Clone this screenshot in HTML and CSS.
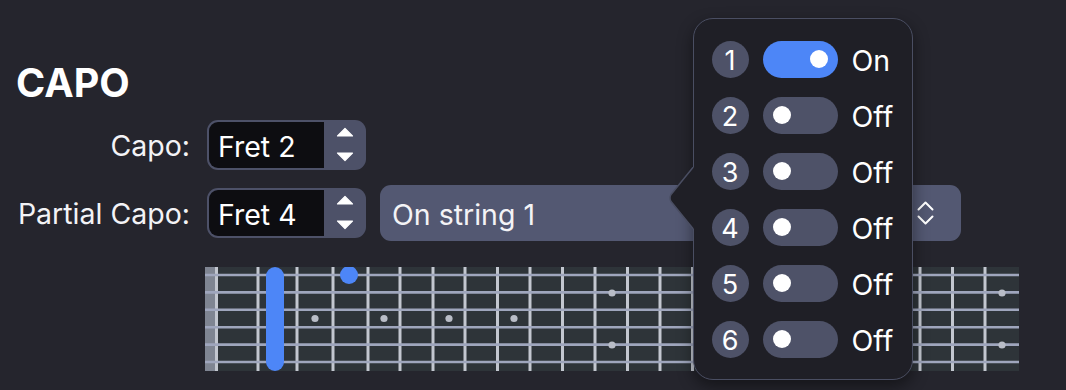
FILE: index.html
```html
<!DOCTYPE html>
<html>
<head>
<meta charset="utf-8">
<title>Capo</title>
<link rel="stylesheet" href="styles.css">
</head>
<body>
<main class="panel">
  <h1 class="title">CAPO</h1>
  <div class="form">
    <span class="label">Capo:</span>
    <div class="controls">
      <div class="stepper">
        <span class="field">Fret 2</span>
        <span class="arrows">
          <svg width="42" height="46" viewBox="0 0 42 46"><polygon points="13.5,14 21,6.5 28.5,14" fill="#fff" stroke="#fff" stroke-width="1.2" stroke-linejoin="round"/><polygon points="13.5,31 28.5,31 21,38.5" fill="#fff" stroke="#fff" stroke-width="1.2" stroke-linejoin="round"/></svg>
        </span>
      </div>
    </div>
    <span class="label">Partial Capo:</span>
    <div class="controls">
      <div class="stepper">
        <span class="field">Fret 4</span>
        <span class="arrows">
          <svg width="42" height="46" viewBox="0 0 42 46"><polygon points="13.5,14 21,6.5 28.5,14" fill="#fff" stroke="#fff" stroke-width="1.2" stroke-linejoin="round"/><polygon points="13.5,31 28.5,31 21,38.5" fill="#fff" stroke="#fff" stroke-width="1.2" stroke-linejoin="round"/></svg>
        </span>
      </div>
      <div class="select">
        <span>On string 1</span>
        <svg class="chevrons" width="17" height="24" viewBox="0 0 17 24"><polyline points="1.5,8.5 8.5,1.5 15.5,8.5" fill="none" stroke="#fff" stroke-width="2" stroke-linecap="round" stroke-linejoin="round"/><polyline points="1.5,15.5 8.5,22.5 15.5,15.5" fill="none" stroke="#fff" stroke-width="2" stroke-linecap="round" stroke-linejoin="round"/></svg>
      </div>
    </div>
  </div>
  <svg class="fretboard" width="814" height="104" viewBox="0 0 814 104">
    <rect x="0" y="0" width="814" height="104" fill="#2e3439"/>
    <rect x="0" y="0" width="10" height="104" fill="#7f8592"/>
    <g stroke="#c3c7d0" stroke-width="3">
      <line x1="11.5" y1="0" x2="11.5" y2="104"/>
      <line x1="53" y1="0" x2="53" y2="104"/>
      <line x1="92" y1="0" x2="92" y2="104"/>
      <line x1="128" y1="0" x2="128" y2="104"/>
      <line x1="163" y1="0" x2="163" y2="104"/>
      <line x1="195" y1="0" x2="195" y2="104"/>
      <line x1="228" y1="0" x2="228" y2="104"/>
      <line x1="260" y1="0" x2="260" y2="104"/>
      <line x1="292.5" y1="0" x2="292.5" y2="104"/>
      <line x1="325" y1="0" x2="325" y2="104"/>
      <line x1="357.5" y1="0" x2="357.5" y2="104"/>
      <line x1="390" y1="0" x2="390" y2="104"/>
      <line x1="422.5" y1="0" x2="422.5" y2="104"/>
      <line x1="455" y1="0" x2="455" y2="104"/>
      <line x1="487.5" y1="0" x2="487.5" y2="104"/>
      <line x1="520" y1="0" x2="520" y2="104"/>
      <line x1="552.5" y1="0" x2="552.5" y2="104"/>
      <line x1="585" y1="0" x2="585" y2="104"/>
      <line x1="617.5" y1="0" x2="617.5" y2="104"/>
      <line x1="650" y1="0" x2="650" y2="104"/>
      <line x1="682.5" y1="0" x2="682.5" y2="104"/>
      <line x1="715" y1="0" x2="715" y2="104"/>
      <line x1="747.5" y1="0" x2="747.5" y2="104"/>
      <line x1="780" y1="0" x2="780" y2="104"/>
    </g>
    <g stroke="#9fa6bd" stroke-width="2.6">
      <line x1="0" y1="8" x2="814" y2="8"/>
      <line x1="0" y1="25.4" x2="814" y2="25.4"/>
      <line x1="0" y1="42.8" x2="814" y2="42.8"/>
      <line x1="0" y1="60.2" x2="814" y2="60.2"/>
      <line x1="0" y1="77.6" x2="814" y2="77.6"/>
      <line x1="0" y1="95" x2="814" y2="95"/>
    </g>
    <g fill="#b9bdc7">
      <circle cx="110" cy="51.5" r="3.6"/>
      <circle cx="179" cy="51.5" r="3.6"/>
      <circle cx="244" cy="51.5" r="3.6"/>
      <circle cx="309" cy="51.5" r="3.6"/>
      <circle cx="407" cy="26" r="3.6"/>
      <circle cx="407" cy="78" r="3.6"/>
      <circle cx="504" cy="51.5" r="3.6"/>
      <circle cx="569" cy="51.5" r="3.6"/>
      <circle cx="634" cy="51.5" r="3.6"/>
      <circle cx="699" cy="51.5" r="3.6"/>
      <circle cx="797" cy="26" r="3.6"/>
      <circle cx="797" cy="78" r="3.6"/>
    </g>
    <rect x="61" y="0" width="18" height="104" rx="9" fill="#4d86f7"/>
    <circle cx="144" cy="8" r="9" fill="#4d86f7"/>
  </svg>
</main>

<div class="popover">
  <svg class="pointer" width="27" height="62" viewBox="0 0 27 62"><path d="M27,0 L24.3,0 L2,27.5 Q0,31 2,34.5 L24.3,62 L27,62 Z" fill="#1f1f26"/><path d="M24.3,0 L2,27.5 Q0,31 2,34.5 L24.3,62" fill="none" stroke="#4a4e62" stroke-width="1.5"/></svg>
  <div class="row"><span class="num">1</span><span class="toggle on"><span class="knob"></span></span><span class="state">On</span></div>
  <div class="row"><span class="num">2</span><span class="toggle"><span class="knob"></span></span><span class="state">Off</span></div>
  <div class="row"><span class="num">3</span><span class="toggle"><span class="knob"></span></span><span class="state">Off</span></div>
  <div class="row"><span class="num">4</span><span class="toggle"><span class="knob"></span></span><span class="state">Off</span></div>
  <div class="row"><span class="num">5</span><span class="toggle"><span class="knob"></span></span><span class="state">Off</span></div>
  <div class="row"><span class="num">6</span><span class="toggle"><span class="knob"></span></span><span class="state">Off</span></div>
</div>
</body>
</html>
```

FILE: styles.css
```css
* {
  box-sizing: border-box;
  margin: 0;
  padding: 0;
}

html,
body {
  width: 1066px;
  height: 390px;
  overflow: hidden;
}

body {
  position: relative;
  background: #25252d;
  color: #f3f3f6;
  font-family: Inter, "Liberation Sans", sans-serif;
  font-size: 28.5px;
}

.panel {
  padding: 60px 0 0 16px;
}

.title {
  font-size: 39.5px;
  font-weight: 700;
  line-height: 46px;
  color: #fff;
}

.form {
  display: grid;
  grid-template-columns: 174px auto;
  column-gap: 17px;
  row-gap: 15px;
  align-items: center;
  margin-top: 14px;
}

.label {
  text-align: right;
  line-height: 1;
  padding-top: 3px;
}

.controls {
  display: flex;
  align-items: center;
  gap: 14px;
}

.stepper {
  display: flex;
  width: 159px;
  height: 50px;
  padding: 2px 0 2px 2px;
  background: #4d5168;
  border-radius: 11px;
}

.field {
  flex: 1;
  display: flex;
  align-items: center;
  padding: 2px 0 0 9px;
  background: #0d0d11;
  border-radius: 9px 0 0 9px;
  color: #fff;
}

.arrows {
  width: 42px;
  display: flex;
}

.select {
  width: 581px;
  height: 56px;
  display: flex;
  align-items: center;
  justify-content: space-between;
  padding: 2px 27px 0 12px;
  background: #535872;
  border-radius: 11px;
}

.chevrons {
  display: block;
  margin-top: -2px;
}

.fretboard {
  display: block;
  margin: 26px 0 0 189px;
}

.popover {
  position: absolute;
  left: 693px;
  top: 18px;
  width: 220px;
  height: 362px;
  padding: 21.5px 0 0 17.5px;
  display: flex;
  flex-direction: column;
  gap: 19px;
  background: #1f1f26;
  border: 1.5px solid #4a4e62;
  border-radius: 20px;
  box-shadow: 0 6px 16px rgba(0, 0, 0, 0.45);
}

.pointer {
  position: absolute;
  left: -25.5px;
  top: 148px;
  display: block;
}

.row {
  display: flex;
  align-items: center;
  gap: 14px;
  height: 37px;
}

.num {
  width: 37px;
  height: 37px;
  border-radius: 50%;
  background: #4e5268;
  display: flex;
  align-items: center;
  justify-content: center;
  padding-top: 2px;
  font-size: 27px;
  color: #fff;
}

.toggle {
  width: 75px;
  height: 37px;
  border-radius: 18.5px;
  background: #4e5268;
  display: flex;
  align-items: center;
  padding: 0 10px;
}

.toggle.on {
  background: #4d86f7;
  justify-content: flex-end;
}

.knob {
  width: 18px;
  height: 18px;
  border-radius: 50%;
  background: #fff;
}

.state {
  color: #fff;
  padding-top: 3px;
}
```
